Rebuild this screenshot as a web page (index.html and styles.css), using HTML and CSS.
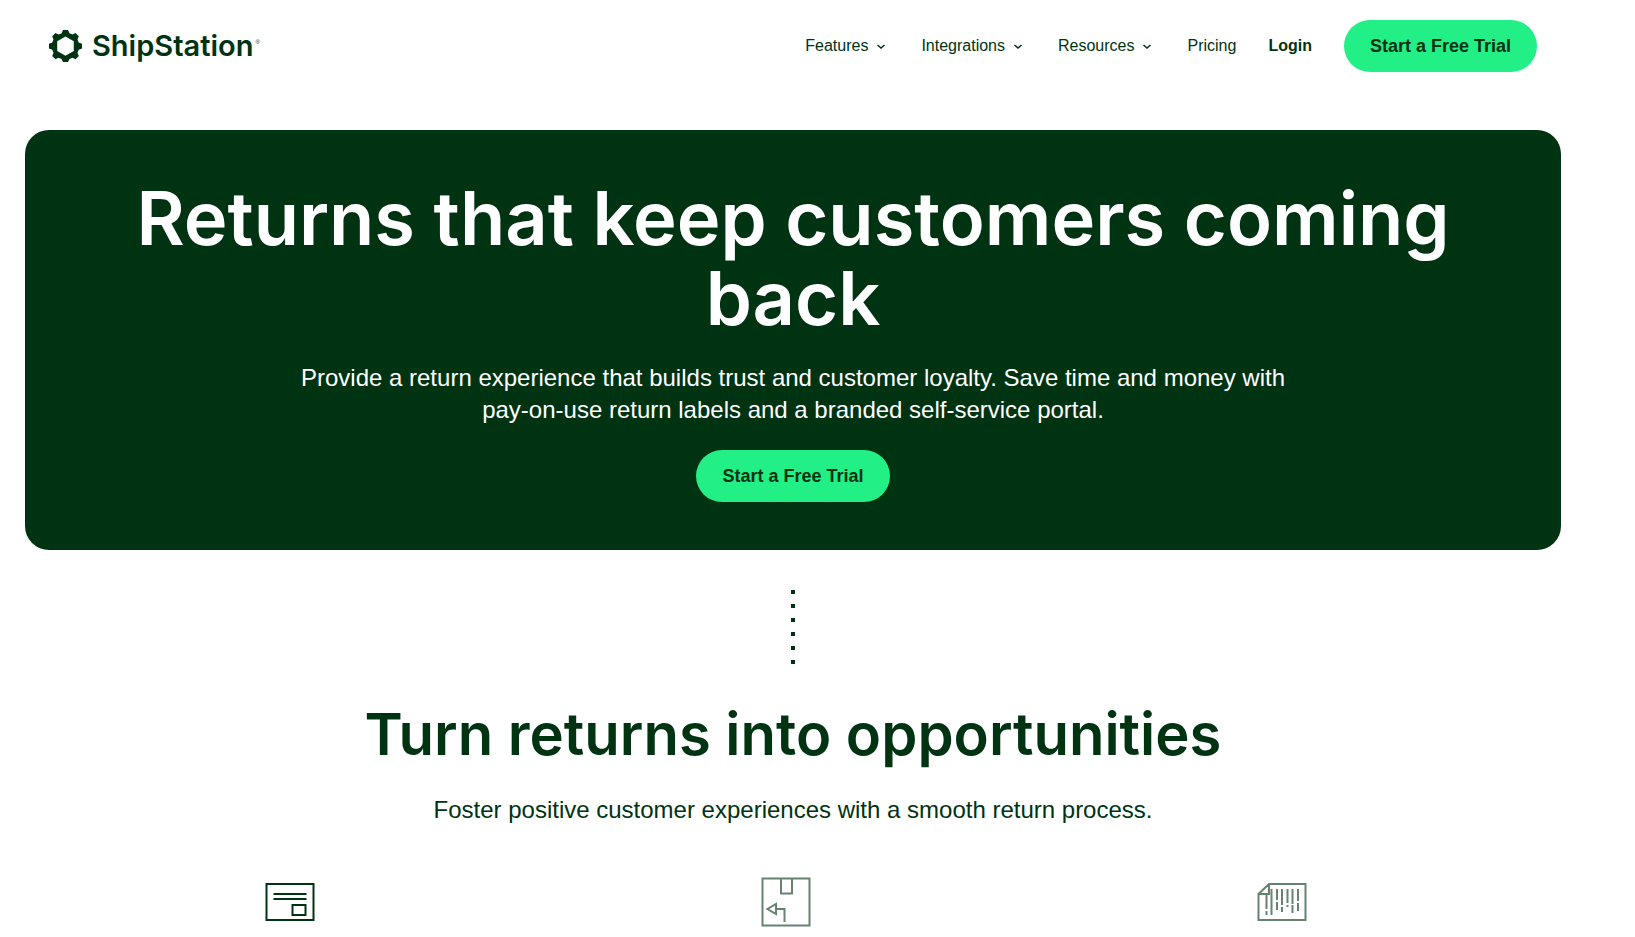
FILE: index.html
```html
<!DOCTYPE html>
<html lang="en">
<head>
  <meta charset="UTF-8">
  <meta name="viewport" content="width=device-width, initial-scale=1.0">
  <title>ShipStation Returns</title>
  <link rel="stylesheet" href="styles.css">
</head>
<body>
  <header class="site-header">
    <a class="logo" href="#" aria-label="ShipStation home">
      <svg class="logo-mark" viewBox="0 0 33 32" aria-hidden="true">
        <path fill="currentColor" fill-rule="evenodd" d="M14 0h5l1.500 3.200 3 1.200L26.500 3l3.300 3.200-1.300 3.300 1.200 3L33 13.800v4.600l-3.300 1.400-1.200 3 1.300 3.200-3.300 3.200-3-1.500-3 1.200L19 32h-5l-1.500-3.100-3-1.200-3 1.500-3.300-3.200 1.300-3.200-1.200-3L0 18.400v-4.600l3.300-1.300 1.200-3-1.300-3.300L6.500 3l3 1.600 3-1.200zM16.500 6.500l-8.300 4.800v9.600l8.300 4.800 8.300-4.800v-9.600z"/>
      </svg>
      <span class="logo-name">ShipStation</span>
      <span class="logo-reg">®</span>
    </a>

    <nav class="nav" aria-label="Main">
      <button class="nav-menu" type="button">Features
        <svg class="chevron" viewBox="0 0 16 16" aria-hidden="true"><path d="M4.500 7 8 10l3.500-3"/></svg>
      </button>
      <button class="nav-menu" type="button">Integrations
        <svg class="chevron" viewBox="0 0 16 16" aria-hidden="true"><path d="M4.500 7 8 10l3.500-3"/></svg>
      </button>
      <button class="nav-menu" type="button">Resources
        <svg class="chevron" viewBox="0 0 16 16" aria-hidden="true"><path d="M4.500 7 8 10l3.500-3"/></svg>
      </button>
      <a class="nav-link" href="#">Pricing</a>
      <a class="nav-link nav-login" href="#">Login</a>
      <button class="btn" type="button">Start a Free Trial</button>
    </nav>
  </header>

  <main>
    <section class="hero">
      <h1 class="hero-title">Returns that keep customers coming back</h1>
      <p class="hero-text">Provide a return experience that builds trust and customer loyalty. Save time and money with pay-on-use return labels and a branded self-service portal.</p>
      <button class="btn" type="button">Start a Free Trial</button>
    </section>

    <section class="intro">
      <svg class="dots" viewBox="0 0 4 74" aria-hidden="true">
        <path d="M2 0v74"/>
      </svg>
      <h2 class="intro-title">Turn returns into opportunities</h2>
      <p class="intro-text">Foster positive customer experiences with a smooth return process.</p>
    </section>

    <section class="features">
      <!-- label -->
      <svg class="feature-icon" viewBox="0 0 50 50" aria-hidden="true">
        <path d="M1.500 7h47v36h-47zM8.500 17h33M8.500 22h33M27.500 28h13v10h-13z"/>
      </svg>
      <!-- returned box -->
      <svg class="feature-icon feature-icon-muted" viewBox="0 0 50 50" aria-hidden="true">
        <path d="M1.500 1.500h47v47h-47zM20 1.500v15h11v-15M15 32h8.500v13M15 27v10l-8.500-5z"/>
      </svg>
      <!-- barcode sheet -->
      <svg class="feature-icon feature-icon-muted" viewBox="0 0 50 50" aria-hidden="true">
        <path d="M12 7h36.500v36h-47V17zM12 7v10H1.500M9.500 18v14M9.500 34v4M14.500 12v26M20 12v11M20 25v8M25 12v16M25 30v5M30.500 12v14M30.500 28v2M35.500 12v15M35.500 28v8M41 12v12M41 26v8"/>
      </svg>
    </section>
  </main>
</body>
</html>
```
FILE: styles.css
```css
* {
  margin: 0;
  padding: 0;
  box-sizing: border-box;
}

body {
  background: #fff;
  color: #003312;
  font-family: "Liberation Sans", Arial, sans-serif;
  font-size: 16px;
  padding: 0 74px 0 25px;
}

a {
  color: inherit;
  text-decoration: none;
}

button {
  background: none;
  border: 0;
  color: #003312;
  font: inherit;
  cursor: pointer;
}

/* Header */
.site-header {
  display: flex;
  justify-content: space-between;
  align-items: center;
  padding: 20px 24px;
  margin-bottom: 38px;
}

.logo {
  display: flex;
  align-items: center;
}

.logo-mark {
  width: 33px;
  height: 32px;
  margin-right: 10px;
}

.logo-name {
  font-family: Inter, sans-serif;
  font-size: 29px;
  font-weight: 600;
  line-height: 32px;
}

.logo-reg {
  font-size: 6px;
  margin: 0 0 8px 2px;
}

.nav {
  display: flex;
  align-items: center;
  gap: 32px;
}

.nav-menu {
  display: flex;
  align-items: center;
  gap: 5px;
}

.chevron {
  width: 16px;
  height: 16px;
  fill: none;
  stroke: currentColor;
  stroke-width: 1.5;
}

.nav-login {
  font-weight: bold;
}

.btn {
  background: #22f086;
  border-radius: 26px;
  font-size: 18px;
  font-weight: bold;
  line-height: 20px;
  padding: 16px 26px;
}

/* Hero */
.hero {
  background: #003312;
  border-radius: 24px;
  color: #fff;
  text-align: center;
  padding: 48px 64px;
}

.hero-title {
  font-family: Inter, sans-serif;
  font-size: 74px;
  font-weight: 600;
  line-height: 80px;
  margin-bottom: 24px;
}

.hero-text {
  font-size: 24px;
  line-height: 32px;
  max-width: 1024px;
  margin: 0 auto 24px;
}

/* Intro */
.intro {
  text-align: center;
  padding-top: 40px;
}

.dots {
  display: block;
  width: 4px;
  height: 74px;
  margin: 0 auto 34px;
  stroke: #003312;
  stroke-width: 4;
  stroke-dasharray: 4 10;
}

.intro-title {
  font-family: Inter, sans-serif;
  font-size: 58px;
  font-weight: 600;
  line-height: 72px;
  margin-bottom: 24px;
}

.intro-text {
  font-size: 24px;
  line-height: 32px;
}

/* Feature icons */
.features {
  display: grid;
  grid-template-columns: repeat(3, 1fr);
  justify-items: center;
  padding: 51px 31px 8px 17px;
}

.feature-icon {
  width: 50px;
  height: 50px;
  fill: none;
  stroke: #003312;
  stroke-width: 2;
}

.feature-icon-muted {
  opacity: 0.6;
}
```
